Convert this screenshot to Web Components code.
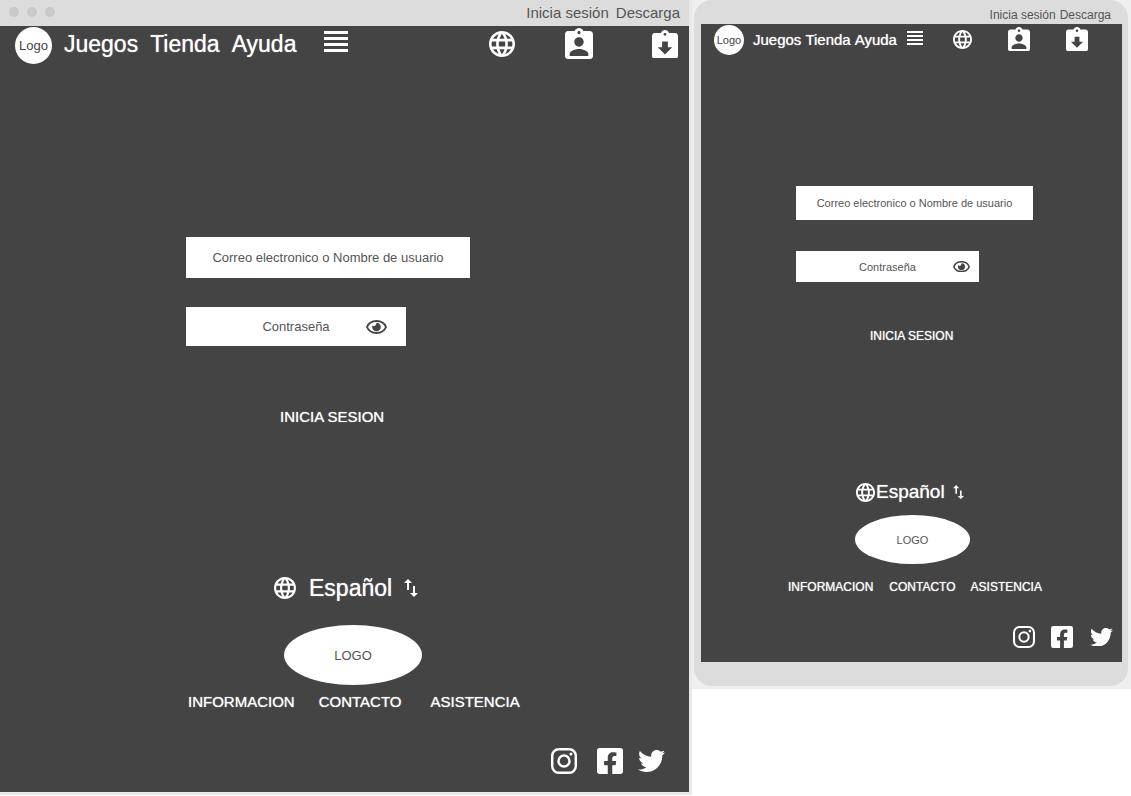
<!DOCTYPE html>
<html lang="es">
<head>
<meta charset="utf-8">
<title>Inicia sesión</title>
<style>
  body { margin: 0; background: #fff; font-family: "Liberation Sans", Arial, sans-serif; color: #fff; }
  .boards { display: grid; grid-template-columns: 692fr 439fr; align-items: start; }
  .desktop {
    --frame-bg: #e9e9e9; --frame-pad: 0 3px 3px 0;
    --device-pad: 0; --device-radius: 0;
    --bar-h: 26px; --bar-pad: 0 9px; --bar-size: 15px; --bar-gap: 7px; --dots: flex;
    --head-h: 38px; --head-pad: 1px 11px 1px 15px; --tools-h: 34px; --logo: 37px; --logo-size: 13px; --logo-gap: 12px;
    --nav-pad: 4px; --nav-size: 23px; --nav-line: 26px; --nav-gap: 12px; --menu-gap: 28px; --menu-w: 24px;
    --globe-w: 26px; --badge-w: 28px; --save-w: 26px; --tool-gap-a: 50px; --tool-gap-b: 59px;
    --form-pad: 171px 0 0 186px; --field-size: 13px; --user-w: 284px; --user-h: 41px; --pass-w: 220px; --pass-h: 39px;
    --field-gap: 29px; --eye-w: 21px; --eye-right: 19px; --enter-pad: 62px 0 0 94px; --caps-size: 15px;
    --foot-pad: 149px 0 18px; --lang-left: 274px; --lang-size: 23px; --lang-line: 26px; --lang-gap: 13px; --lang-globe: 22px; --swap-w: 14px; --swap-gap: 12px;
    --oval-pad: 24px 0 8px 284px; --oval-w: 138px; --oval-h: 60px;
    --links-left: 188px; --link-gap-a: 24px; --link-gap-b: 29px;
    --social-pad: 37px 24px 0 0; --social-w: 26px; --bird-w: 27px; --social-gap-a: 20px; --social-gap-b: 15px;
  }
  .mobile {
    --frame-bg: #efefef; --frame-pad: 0 3px 3px 2px;
    --device-pad: 0 6px 24px 7px; --device-radius: 18px;
    --bar-h: 24px; --bar-pad: 6px 11px 0; --bar-size: 12px; --bar-gap: 4px; --dots: none;
    --head-h: 30px; --head-pad: 1px 34px 1px 13px; --tools-h: 28px; --logo: 30px; --logo-size: 11px; --logo-gap: 9px;
    --nav-pad: 6px; --nav-size: 15px; --nav-line: 18px; --nav-gap: 4px; --menu-gap: 10px; --menu-w: 16px;
    --globe-w: 19px; --badge-w: 22px; --save-w: 22px; --tool-gap-a: 36px; --tool-gap-b: 36px;
    --form-pad: 130px 0 0 95px; --field-size: 11px; --user-w: 237px; --user-h: 34px; --pass-w: 183px; --pass-h: 31px;
    --field-gap: 31px; --eye-w: 17px; --eye-right: 9px; --enter-pad: 45px 0 0 74px; --caps-size: 12px;
    --foot-pad: 137px 0 14px; --lang-left: 155px; --lang-size: 19px; --lang-line: 20px; --lang-gap: 1px; --lang-globe: 19px; --swap-w: 11px; --swap-gap: 8px;
    --oval-pad: 13px 0 14px 154px; --oval-w: 115px; --oval-h: 49px;
    --links-left: 87px; --link-gap-a: 16px; --link-gap-b: 15px;
    --social-pad: 30px 9px 0 0; --social-w: 22px; --bird-w: 23px; --social-gap-a: 16px; --social-gap-b: 17px;
  }
</style>
</head>
<body>
<main class="boards">
  <device-frame class="desktop">
    <site-header></site-header>
    <login-form></login-form>
    <site-footer></site-footer>
  </device-frame>
  <device-frame class="mobile">
    <site-header></site-header>
    <login-form></login-form>
    <site-footer></site-footer>
  </device-frame>
</main>

<script>
const CLIP = 'M19 3h-4.18C14.4 1.84 13.3 1 12 1c-1.3 0-2.4.84-2.82 2H5c-1.1 0-2 .9-2 2v14c0 1.1.9 2 2 2h14c1.1 0 2-.9 2-2V5c0-1.1-.9-2-2-2zm-7 0c.55 0 1 .45 1 1s-.45 1-1 1-1-.45-1-1 .45-1 1-1z';
const ICONS = {
  menu: ['4 5 16 14', '<path d="M4 15h16v-2H4v2zm0 4h16v-2H4v2zm0-8h16V9H4v2zm0-6v2h16V5H4z"/>'],
  globe: ['2 2 20 20', '<path d="M11.99 2C6.47 2 2 6.48 2 12s4.47 10 9.99 10C17.52 22 22 17.52 22 12S17.52 2 11.99 2zm6.93 6h-2.95c-.32-1.25-.78-2.45-1.38-3.56 1.84.63 3.37 1.91 4.33 3.56zM12 4.04c.83 1.2 1.48 2.53 1.91 3.96h-3.82c.43-1.43 1.08-2.76 1.91-3.96zM4.26 14C4.1 13.36 4 12.69 4 12s.1-1.36.26-2h3.38c-.08.66-.14 1.32-.14 2 0 .68.06 1.34.14 2H4.26zm.82 2h2.95c.32 1.25.78 2.45 1.38 3.56-1.84-.63-3.37-1.9-4.33-3.56zm2.95-8H5.08c.96-1.66 2.49-2.93 4.33-3.56C8.81 5.55 8.35 6.75 8.03 8zM12 19.96c-.83-1.2-1.48-2.53-1.91-3.96h3.82c-.43 1.43-1.08 2.76-1.91 3.96zM14.34 14H9.66c-.09-.66-.16-1.32-.16-2 0-.68.07-1.35.16-2h4.68c.09.65.16 1.32.16 2 0 .68-.07 1.34-.16 2zm.25 5.56c.6-1.11 1.06-2.31 1.38-3.56h2.95c-.96 1.65-2.49 2.93-4.33 3.56zM16.36 14c.08-.66.14-1.32.14-2 0-.68-.06-1.34-.14-2h3.38c.16.64.26 1.31.26 2s-.1 1.36-.26 2h-3.38z"/>'],
  badge: ['3 1 18 20', `<path d="${CLIP}m0 4c1.66 0 3 1.34 3 3s-1.34 3-3 3-3-1.34-3-3 1.34-3 3-3zm6 12H6v-1.4c0-2 4-3.1 6-3.1s6 1.1 6 3.1V19z"/>`],
  save: ['3 1 18 20', `<path d="${CLIP}m0 15l-5-5h3V9h4v4h3l-5 5z"/>`],
  swap: ['5 3 14 18', '<path d="M9 3L5 6.99h3V14h2V6.99h3L9 3zm7 14.01V10h-2v7.01h-3L15 21l4-3.99h-3z"/>'],
  eye: ['0 0 21 14', '<path d="M1 7C2.600 3 6.200 1 10.500 1S18.400 3 20 7C18.400 11 14.800 13 10.500 13S2.600 11 1 7Z" fill="none" stroke="currentColor" stroke-width="1.900"/><path d="M10.500 2.700a4.300 4.300 0 1 1-4.300 4.300c0-.6.1-1.100.3-1.600.6.500 1.500.7 2.300.4.900-.4 1.500-1.300 1.700-3.100Z"/>'],
  instagram: ['0 32 448 448', '<rect x="21" y="53" width="406" height="406" rx="112" fill="none" stroke="currentColor" stroke-width="42"/><circle cx="224" cy="256" r="95" fill="none" stroke="currentColor" stroke-width="42"/><circle cx="344" cy="136" r="27"/>'],
  facebook: ['0 32 448 448', '<path d="M400 32H48A48 48 0 0 0 0 80v352a48 48 0 0 0 48 48h137.25V327.69h-63V256h63v-54.64c0-62.15 37-96.48 93.67-96.48 27.14 0 55.52 4.84 55.52 4.84v61h-31.27c-30.81 0-40.42 19.12-40.42 38.73V256h68.78l-11 71.69h-57.78V480H400a48 48 0 0 0 48-48V80a48 48 0 0 0-48-48z"/>'],
  twitter: ['0 48 512 416', '<path d="M459.37 151.716c.325 4.548.325 9.097.325 13.645 0 138.72-105.583 298.558-298.558 298.558-59.452 0-114.68-17.219-161.137-47.106 8.447.974 16.568 1.299 25.34 1.299 49.055 0 94.213-16.568 130.274-44.832-46.132-.975-84.792-31.188-98.112-72.772 6.498.974 12.995 1.624 19.818 1.624 9.421 0 18.843-1.3 27.614-3.573-48.081-9.747-84.143-51.98-84.143-102.985v-1.299c13.969 7.797 30.214 12.67 47.431 13.319-28.264-18.843-46.781-51.005-46.781-87.391 0-19.492 5.197-37.36 14.294-52.954 51.655 63.675 129.3 105.258 216.365 109.807-1.624-7.797-2.599-15.918-2.599-24.04 0-57.828 46.782-104.934 104.934-104.934 30.213 0 57.502 12.67 76.67 33.137 23.715-4.548 46.456-13.32 66.599-25.34-7.798 24.366-24.366 44.833-46.132 57.827 21.117-2.273 41.584-8.122 60.426-16.243-14.292 20.791-32.161 39.308-52.628 54.253z"/>']
};

const RESET = `
  *, *::before { box-sizing: border-box; }
  a { color: inherit; text-decoration: none; white-space: nowrap; }
  button { margin: 0; padding: 0; border: 0; background: none; color: inherit; font: inherit; text-shadow: inherit; cursor: pointer; white-space: nowrap; }
  a:has(ui-icon), button { display: block; }
`;

class Base extends HTMLElement {
  connectedCallback() {
    if (this.shadowRoot) return;
    this.attachShadow({ mode: 'open' }).innerHTML = `<style>${RESET}${this.css()}</style>${this.html()}`;
  }
}

customElements.define('ui-icon', class extends Base {
  css() { return `:host { display: block; width: 24px; } svg { display: block; width: 100%; height: auto; fill: currentColor; }`; }
  html() {
    const [box, body] = ICONS[this.getAttribute('name')];
    return `<svg viewBox="${box}" aria-hidden="true">${body}</svg>`;
  }
});

customElements.define('device-frame', class extends Base {
  css() { return `
    :host { display: block; background: var(--frame-bg); padding: var(--frame-pad); }
    .device { background: #dcdcdc; padding: var(--device-pad); border-radius: var(--device-radius); }
    .bar { display: flex; align-items: center; height: var(--bar-h); padding: var(--bar-pad); color: #555; font-size: var(--bar-size); line-height: 18px; }
    .dots { display: var(--dots); gap: 8px; padding-bottom: 2px; }
    .dots i { width: 10px; height: 10px; border-radius: 50%; background: #c9c9c9; }
    nav { display: flex; gap: var(--bar-gap); margin-left: auto; }
    .screen { background: #444; }`; }
  html() { return `
    <div class="device">
      <div class="bar"><span class="dots"><i></i><i></i><i></i></span>
        <nav><a href="#inicia">Inicia sesión</a><a href="#descarga">Descarga</a></nav></div>
      <div class="screen"><slot></slot></div>
    </div>`; }
});

customElements.define('site-header', class extends Base {
  css() { return `
    :host { display: block; }
    header { display: flex; align-items: flex-start; height: calc(var(--head-h) + 2px); padding: var(--head-pad); }
    .logo { display: grid; place-items: center; width: var(--logo); height: var(--logo); border-radius: 50%; background: #fff; color: #444; font-size: var(--logo-size); }
    nav { display: flex; gap: var(--nav-gap); margin-left: var(--logo-gap); padding-top: var(--nav-pad); font-size: var(--nav-size); line-height: var(--nav-line); text-shadow: 0 0 1px #ddd; }
    .menu { margin-left: var(--menu-gap); padding-top: var(--nav-pad); }
    .menu ui-icon { width: var(--menu-w); }
    .tools { display: flex; align-items: center; height: var(--tools-h); margin-left: auto; }
    .globe { width: var(--globe-w); }
    .badge { width: var(--badge-w); margin: 0 var(--tool-gap-b) 0 var(--tool-gap-a); }
    .save { width: var(--save-w); }`; }
  html() { return `
    <header>
      <a class="logo" href="#inicio">Logo</a>
      <nav><a href="#juegos">Juegos</a><a href="#tienda">Tienda</a><a href="#ayuda">Ayuda</a></nav>
      <button class="menu" type="button" aria-label="Menú"><ui-icon name="menu"></ui-icon></button>
      <div class="tools">
        <button type="button" aria-label="Idioma"><ui-icon class="globe" name="globe"></ui-icon></button>
        <button type="button" aria-label="Cuenta"><ui-icon class="badge" name="badge"></ui-icon></button>
        <button type="button" aria-label="Descargar"><ui-icon class="save" name="save"></ui-icon></button>
      </div>
    </header>`; }
});

customElements.define('login-form', class extends Base {
  css() { return `
    :host { display: block; }
    form { padding: var(--form-pad); }
    input { display: block; width: 100%; height: 100%; margin: 0; padding: 0; border: 0; border-radius: 0; background: #fff; color: #555; font: inherit; text-align: center; }
    input::placeholder { color: #555; opacity: 1; }
    .field { position: relative; max-width: 100%; font-size: var(--field-size); }
    .user { width: var(--user-w); height: var(--user-h); margin-bottom: var(--field-gap); }
    .pass { width: var(--pass-w); height: var(--pass-h); }
    .eye { position: absolute; top: 0; bottom: 0; right: var(--eye-right); color: #444; }
    .eye ui-icon { width: var(--eye-w); }
    .enter { padding: var(--enter-pad); font-size: var(--caps-size); line-height: 18px; text-shadow: 0 0 1px #ddd; }`; }
  html() { return `
    <form onsubmit="return false">
      <div class="field user"><input type="text" aria-label="Correo electronico o Nombre de usuario" placeholder="Correo electronico o Nombre de usuario"></div>
      <div class="field pass"><input type="password" aria-label="Contraseña" placeholder="Contraseña">
        <button class="eye" type="button" aria-label="Mostrar contraseña"><ui-icon name="eye"></ui-icon></button></div>
      <div class="enter"><button type="submit">INICIA SESION</button></div>
    </form>`; }
});

customElements.define('site-footer', class extends Base {
  css() { return `
    :host { display: block; }
    footer { padding: var(--foot-pad); }
    .lang { display: flex; align-items: center; margin-left: var(--lang-left); font-size: var(--lang-size); line-height: var(--lang-line); text-shadow: 0 0 1px #ddd; }
    .globe { width: var(--lang-globe); margin-right: var(--lang-gap); }
    .swap { width: var(--swap-w); margin-left: var(--swap-gap); }
    .brand { padding: var(--oval-pad); }
    .oval { display: grid; place-items: center; width: var(--oval-w); height: var(--oval-h); border-radius: 50%; background: #fff; color: #555; font-size: var(--field-size); }
    .links { display: flex; margin-left: var(--links-left); font-size: var(--caps-size); line-height: 18px; text-shadow: 0 0 1px #ddd; }
    .contact { margin: 0 var(--link-gap-b) 0 var(--link-gap-a); }
    .social { display: flex; align-items: center; justify-content: flex-end; padding: var(--social-pad); }
    .social ui-icon { width: var(--social-w); }
    .social .fb { margin: 0 var(--social-gap-b) 0 var(--social-gap-a); }
    .social .bird { width: var(--bird-w); }`; }
  html() { return `
    <footer>
      <button class="lang" type="button"><ui-icon class="globe" name="globe"></ui-icon>Español<ui-icon class="swap" name="swap"></ui-icon></button>
      <div class="brand"><a class="oval" href="#inicio">LOGO</a></div>
      <nav class="links"><a href="#informacion">INFORMACION</a><a class="contact" href="#contacto">CONTACTO</a><a href="#asistencia">ASISTENCIA</a></nav>
      <div class="social">
        <a href="#instagram" aria-label="Instagram"><ui-icon name="instagram"></ui-icon></a>
        <a href="#facebook" aria-label="Facebook"><ui-icon class="fb" name="facebook"></ui-icon></a>
        <a href="#twitter" aria-label="Twitter"><ui-icon class="bird" name="twitter"></ui-icon></a>
      </div>
    </footer>`; }
});
</script>
</body>
</html>
